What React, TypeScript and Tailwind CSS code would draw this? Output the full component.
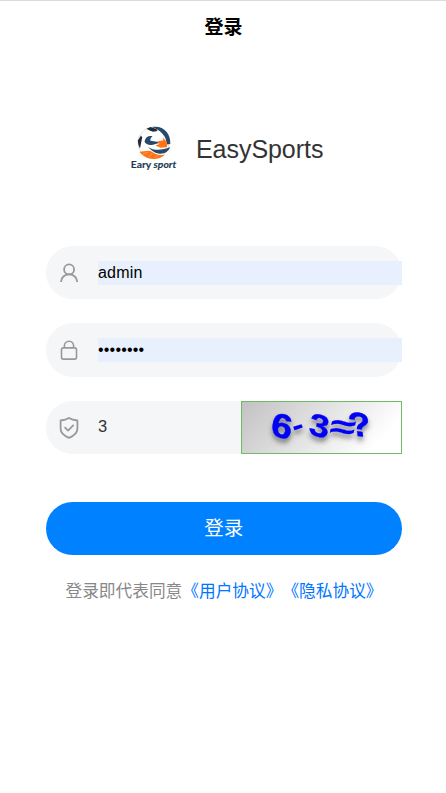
import type { ReactNode } from "react";

function Logo() {
  return (
    <svg className="h-[50px] w-[50px] shrink-0" viewBox="0 0 50 50">
      <circle cx="24.5" cy="18.8" r="15.6" fill="#fff" stroke="#d5d5d5" strokeWidth=".7" />
      <path d="M23 3C34 1 42 9 41.3 20L37.5 20.5C38 12 31 6 23 3z" fill="#27496a" />
      <path d="M17.5 4.7l4-1.6 6 1.8 1 2-4.5.8-4-1.4z" fill="#222b35" />
      <path d="M8.8 16.5l3.2-5.1 1.2 2-1.4 7-.8 4a16 16 0 0 1-2.2-7.9z" fill="#222b35" />
      <path d="M15.5 17.5c1-4.5 4-6 8-5.2-2 1.5-2.5 3.2-2 4.5l6.5 1 3 1-8 2.2c-4 .3-6.5-1-7.5-3.5z" fill="#27496a" />
      <path d="M28 17.5l6.5-1.2-1-3.2 4.5 5.2v4.9l-6.5.5-5-2.1 4-1.6z" fill="#ff7315" />
      <path d="M19 23c6 4 14 3.6 22.2.1-2 5.4-6.8 7.5-12 6.4-4-.8-6.5-3-10.2-6.5z" fill="#27496a" />
      <path d="M10.5 27.8c5-.5 9.5-2.3 13 .2 4 2.8 6 3.5 12.5 2.8-7 6.5-20 5.3-25.5-3z" fill="#ff7315" />
      <path d="M14 30l5-2M20 33l4-4.5M26 34l3.5-4" stroke="#fff" strokeOpacity=".35" strokeWidth=".8" />
      <text x="1.8" y="43.5" textLength="45.5" lengthAdjust="spacingAndGlyphs" fill="#203b56" stroke="#203b56" strokeWidth=".15" className="font-['Lato',sans-serif] text-[10px] font-bold">
        Eary <tspan fontStyle="italic">sport</tspan>
      </text>
    </svg>
  );
}

function UserIcon() {
  return (
    <svg className="h-6 w-6" viewBox="0 0 24 24" fill="none" stroke="#999" strokeWidth="1.8">
      <circle cx="12.1" cy="8.4" r="5" />
      <path d="M4 20.9c0-4.3 3.6-7.5 8.1-7.5s8.1 3.2 8.1 7.5" />
    </svg>
  );
}

function LockIcon() {
  return (
    <svg className="h-6 w-6" viewBox="0 0 24 24" fill="none" stroke="#999" strokeWidth="1.6">
      <rect x="4.5" y="9.9" width="15" height="11.2" rx="1.8" />
      <path d="M7.4 9.7V7.8a4.6 4.6 0 0 1 9.2 0v1.9" />
    </svg>
  );
}

function ShieldIcon() {
  return (
    <svg className="h-6 w-6" viewBox="0 0 24 24" fill="none" stroke="#999" strokeWidth="1.8" strokeLinejoin="round">
      <path d="M12 1.9c2.4 1.6 5.2 2.3 8.4 2.6v8.1c0 4.2-3.6 7.4-8.4 9.3-4.8-1.9-8.4-5.1-8.4-9.3V4.5c3.2-.3 6-1 8.4-2.6z" />
      <path d="M7.6 11.2l3.4 3.4 5.7-5.7" />
    </svg>
  );
}

function Captcha() {
  return (
    <svg className="h-[53px] w-[161px] shrink-0 border border-[#6fba65]" viewBox="1 1 159 51">
      <defs>
        <linearGradient id="captcha-bg" x1="0" y1="0" x2="1" y2="0.3">
          <stop offset="0" stopColor="#c1c1c1" />
          <stop offset="1" stopColor="#fff" />
        </linearGradient>
        <filter id="captcha-shadow" x="-20%" y="-30%" width="140%" height="180%">
          <feDropShadow dx="0" dy="4" stdDeviation="2.5" floodColor="#333" floodOpacity=".6" />
        </filter>
      </defs>
      <rect width="161" height="53" fill="url(#captcha-bg)" />
      <g filter="url(#captcha-shadow)" fill="#0000f5" stroke="#0000f5" strokeLinejoin="round" className="font-['Liberation_Sans',sans-serif] text-[32px] font-bold">
        <text transform="translate(29 34) rotate(14) skewX(6) scale(1.2 1.05)" strokeWidth=".5">6</text>
        <text transform="translate(54 35) rotate(-18) scale(1.05 .9)" strokeWidth=".2">-</text>
        <text transform="translate(67 33) rotate(14) skewX(6) scale(1.15 .98)" strokeWidth=".4">3</text>
        <text transform="translate(87 36.5) rotate(3) skewX(-8) scale(1.45 1.05)" strokeWidth=".2">≈</text>
        <text transform="translate(109 34.5) rotate(4) skewX(12) scale(1.15 1.05)" strokeWidth=".4">?</text>
      </g>
    </svg>
  );
}

function Field({ icon, children, className = "" }: { icon: ReactNode; children: ReactNode; className?: string }) {
  return (
    <div className={`flex items-center rounded-l-full bg-[#f4f6f8] pl-[11.5px] ${className}`}>
      {icon}
      <div className="ml-[17px] flex min-w-0 flex-1 items-center">{children}</div>
    </div>
  );
}

export default function App() {
  return (
    <main className="min-h-[793px] border-t border-[#dcdcdc] bg-white font-['Liberation_Sans','Noto_Sans_CJK_SC',sans-serif]">
      <h1 className="pt-[12.5px] pl-px text-center text-[19px] leading-7 font-bold text-black">登录</h1>
      <header className="mt-[82.5px] flex h-[50px] items-center pl-[129px]">
        <Logo />
        <span className="ml-[17px] text-[25px] leading-[30px] tracking-[-0.05px] text-[#333]">EasySports</span>
      </header>
      <form className="mt-[72px] ml-[45.5px] w-[356.5px]" onSubmit={(e) => e.preventDefault()}>
        <Field icon={<UserIcon />} className="h-[53px] rounded-r-full">
          <input aria-label="用户名" defaultValue="admin" className="h-6 w-full bg-[#e8f0fe] text-[16px] tracking-[0.2px] text-black outline-none" />
        </Field>
        <Field icon={<LockIcon />} className="mt-6 h-[54px] rounded-r-full">
          <input aria-label="密码" type="password" defaultValue="password" className="h-6 w-full bg-[#e8f0fe] text-[16px] tracking-[0.2px] text-black outline-none" />
        </Field>
        <Field icon={<ShieldIcon />} className="mt-6 h-[53px]">
          <input aria-label="验证码" defaultValue="3" className="h-6 min-w-0 flex-1 bg-transparent pb-[2px] text-[16.5px] text-[#333] outline-none" />
          <Captcha />
        </Field>
        <button className="mt-[47.5px] block h-[53.5px] w-full rounded-full bg-[#0081ff] pt-px text-[19.5px] font-normal text-white">登录</button>
      </form>
      <p className="mt-[22.5px] ml-[65.5px] text-[16.7px] leading-7 font-normal whitespace-nowrap text-[#888] [font-kerning:none] [text-spacing-trim:space-all]">
        登录即代表同意<span className="text-[#0075ff]">《用户协议》《隐私协议》</span>
      </p>
    </main>
  );
}
